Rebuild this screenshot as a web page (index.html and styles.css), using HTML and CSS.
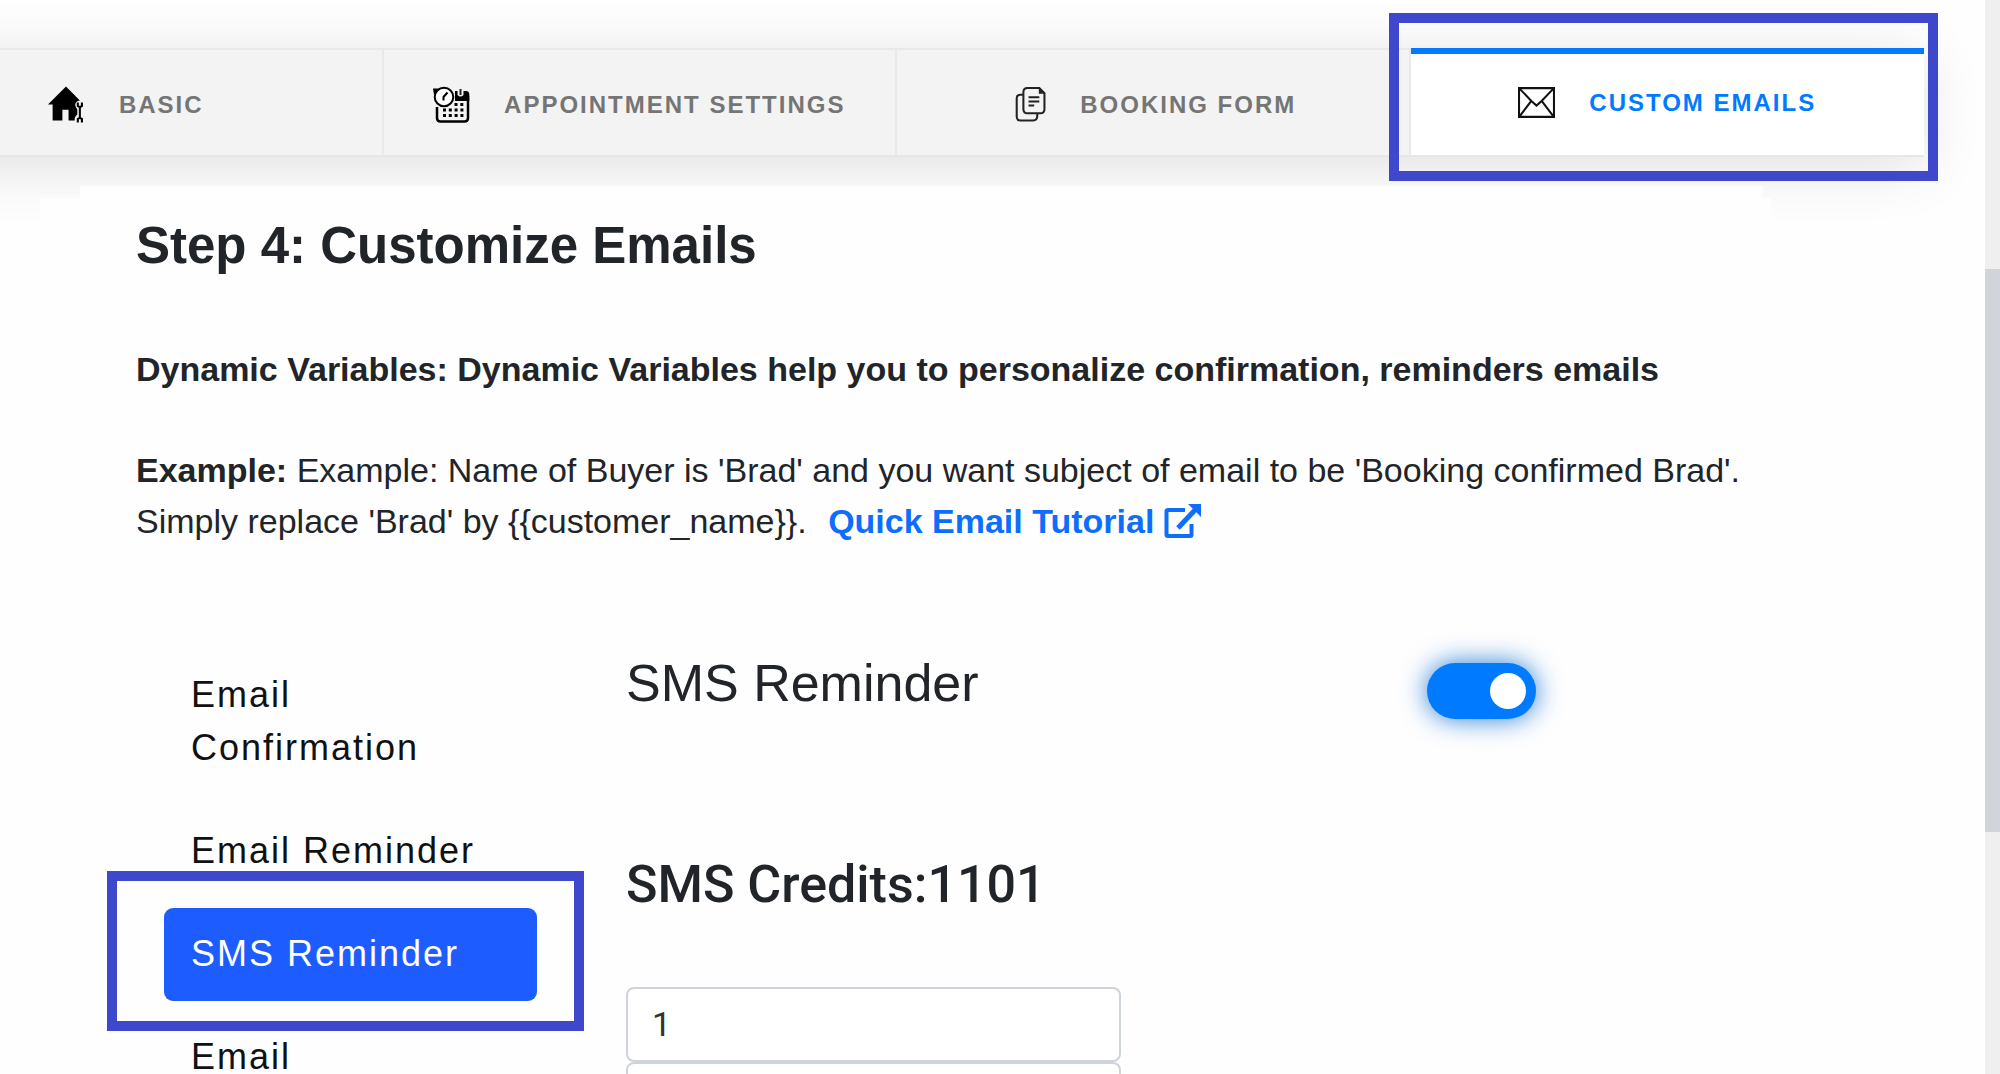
FILE: index.html
```
<!DOCTYPE html>
<html lang="en">
<head>
    <meta charset="UTF-8">
    <meta name="viewport" content="width=device-width, initial-scale=1.0">
    <title>Customize Emails</title>
    <link rel="stylesheet" href="styles.css">
</head>
<body>
    <div class="page">
        <nav class="tabs">
            <a class="tab" href="#basic">
                <svg class="tab-icon" viewBox="0 0 36 36">
                    <path d="M0 18 L17.500 0.500 L31 14 Q27 14.500 26.500 18 Q26.500 21 28.500 22.500 V28 Q25.500 30 26 33.500 H20 V23 H14 V33.500 H4.500 V18 Z" fill="#000"/>
                    <path d="M29 16 V19.500 L31 20.500 L33 19.500 V16 M31 20.500 V31 M29 35.500 V32 L31 31 L33 32 V35.500" fill="none" stroke="#000" stroke-width="2"/>
                </svg>
                Basic
            </a>
            <a class="tab" href="#appointment">
                <svg class="tab-icon" viewBox="0 0 37 37">
                    <path d="M4 21 V32 Q4 35.500 7.500 35.500 H31.500 Q35 35.500 35 32 V10" fill="none" stroke="#000" stroke-width="2.500"/>
                    <path d="M22 5 H24.500 V9 Q27.500 12 30.500 9 V5 H33 Q36.300 5 36.300 8.500 V15 H22 Z" fill="#000"/>
                    <path d="M27.500 3 V9" stroke="#222" stroke-width="2"/>
                    <circle cx="11" cy="11" r="9.300" fill="#fff" stroke="#000" stroke-width="2"/>
                    <path d="M0 2.500 H6 L1 9 Z" fill="#000"/>
                    <path d="M14.500 6.500 L10.500 11 V14.500" fill="none" stroke="#000" stroke-width="2"/>
                    <path d="M21.500 18.500 H31 M10 24 H31 M10 29.500 H31" fill="none" stroke="#000" stroke-width="3" stroke-dasharray="3 2.800"/>
                </svg>
                Appointment settings
            </a>
            <a class="tab" href="#booking">
                <svg class="tab-icon" viewBox="0 0 30 36" preserveAspectRatio="xMaxYMid">
                    <g fill="none" stroke="#222" stroke-width="2">
                        <path d="M7.500 8.500 H5 Q1.500 8.500 1.500 12 V30 Q1.500 33.500 5 33.500 H17.500 Q21.500 33.500 21.500 29.500 V27"/>
                        <path d="M12 2 H23.500 L28.500 7 V22.500 Q28.500 26.500 24.500 26.500 H12 Q8 26.500 8 22.500 V6 Q8 2 12 2 Z"/>
                        <path d="M13 11 H23.500 M13 15 H23.500 M13 19 H18.500"/>
                    </g>
                    <path d="M23 2 V7.500 H28.500 Z" fill="#222"/>
                </svg>
                Booking form
            </a>
            <a class="tab tab-active" href="#emails">
                <svg class="tab-icon" viewBox="0 0 36 36">
                    <path d="M1 4 H35 V32 H1 Z M1.500 4.500 L13 16.500 L18 21 L23 16.500 L34.500 4.500 M1.500 31.500 L13 16.500 M34.500 31.500 L23 16.500" fill="none" stroke="#111" stroke-width="2"/>
                </svg>
                Custom emails
                <span class="marker marker-tab"></span>
            </a>
        </nav>

        <main class="content">
            <h1>Step 4: Customize Emails</h1>
            <p class="intro"><b>Dynamic Variables: Dynamic Variables help you to personalize confirmation, reminders emails</b></p>
            <p class="intro">
                <b>Example:</b> Example: Name of Buyer is 'Brad' and you want subject of email to be 'Booking confirmed Brad'.<br>
                Simply replace 'Brad' by {{customer_name}}.
                <a class="tutorial" href="#tutorial">Quick Email Tutorial
                    <svg class="tutorial-icon" viewBox="0 0 38 36">
                        <path d="M21 7 H4 Q2.500 7 2.500 8.500 V31.500 Q2.500 33 4 33 H26 Q27.500 33 27.500 31.500 V21" fill="none" stroke="#0d6efd" stroke-width="4"/>
                        <path d="M14 25 L31 7" stroke="#0d6efd" stroke-width="5"/>
                        <path d="M24 1 H37 V14 Z" fill="#0d6efd"/>
                    </svg>
                </a>
            </p>

            <div class="panes">
                <div class="menu">
                    <a class="menu-item" href="#confirmation">Email Confirmation</a>
                    <a class="menu-item" href="#reminder">Email Reminder</a>
                    <a class="menu-item menu-active" href="#sms">SMS Reminder<span class="marker marker-menu"></span></a>
                    <a class="menu-item" href="#followup">Email</a>
                </div>
                <form class="settings">
                    <div class="settings-head">
                        <h2><label for="sms">SMS Reminder</label></h2>
                        <input class="switch" type="checkbox" id="sms" checked>
                    </div>
                    <h2 class="credits">SMS Credits:1101</h2>
                    <input class="field" type="text" value="1" aria-label="Reminder time">
                    <input class="field" type="text" aria-label="Reminder unit">
                </form>
            </div>
        </main>
    </div>
    <div class="scrollbar"><div class="thumb"></div></div>
</body>
</html>
```

FILE: styles.css
```
* {
    box-sizing: border-box;
}
body {
    display: flex;
    height: 100vh;
    margin: 0;
    overflow: hidden;
    background: #fefefe;
    color: #212529;
    font-family: "Liberation Sans", Arial, sans-serif;
    font-size: 34px;
}
a {
    text-decoration: none;
}
.page {
    flex: 1;
    min-width: 0;
    overflow: hidden;
}

/* tabs */
.tabs {
    display: grid;
    grid-template-columns: repeat(4, 1fr);
    margin: 48px 61px 0 -130px;
    border-top: 2px solid #e9e9e9;
    border-bottom: 2px solid #e7e7e7;
    background: #f3f3f3;
    box-shadow: 0 10px 60px rgba(0, 0, 0, 0.12);
}
.tab {
    position: relative;
    display: flex;
    align-items: center;
    justify-content: center;
    gap: 34px;
    height: 105px;
    padding-top: 4px;
    border-right: 2px solid #e9e9e9;
    color: #757575;
    font-size: 24px;
    font-weight: bold;
    letter-spacing: 2px;
    text-transform: uppercase;
}
.tab-icon {
    width: 37px;
    height: 37px;
}
.tab-active {
    height: 107px;
    margin-top: -2px;
    padding: 0 0 4px;
    border-top: 6px solid #007bff;
    border-right: none;
    background: #fff;
    color: #007bff;
}

/* highlight frames */
.marker {
    position: absolute;
    border: 10px solid #3f48cc;
}
.marker-tab {
    inset: -41px -14px -26px -22px;
}
.marker-menu {
    inset: -37px -47px -30px -57px;
}

/* content */
.content {
    position: relative;
    margin: 29px 222px 0 80px;
    padding: 30px 0 0 56px;
    background: #fefefe;
    box-shadow: -40px 12px 0 #fefefe, 8px 12px 0 #fefefe;
}
h1 {
    margin: 0 0 68px;
    font-size: 51px;
    line-height: 60px;
}
.intro {
    margin: 0 0 50px;
    line-height: 51px;
}
.tutorial {
    margin-left: 12px;
    color: #0d6efd;
    font-weight: bold;
}
.tutorial-icon {
    width: 38px;
    height: 36px;
    vertical-align: -6px;
}
.panes {
    display: flex;
    gap: 89px;
    margin-top: 102px;
    padding-left: 28px;
}
.menu {
    display: flex;
    flex-direction: column;
    gap: 10px;
    width: 373px;
}
.menu-item {
    position: relative;
    padding: 19px 27px 21px;
    border-radius: 9px;
    color: #111;
    font-size: 36px;
    line-height: 53px;
    letter-spacing: 2px;
}
.menu-active {
    background: #1d5dff;
    color: #fff;
}
.settings {
    flex: 1;
}
.settings-head {
    display: flex;
    align-items: flex-start;
    justify-content: space-between;
    padding-right: 227px;
}
h2 {
    margin: 3px 0 0;
    font-size: 52px;
    font-weight: normal;
    line-height: 62px;
}
.credits {
    margin: 135px 0 71px;
    font-family: Roboto, sans-serif;
    font-weight: 500;
}
.switch {
    appearance: none;
    width: 109px;
    height: 56px;
    margin: 14px 0 0;
    padding: 10px;
    border-radius: 28px;
    background: #007bff;
    box-shadow: 0 0 27px #2a7fd8;
}
.switch::before {
    content: "";
    display: block;
    width: 36px;
    height: 36px;
    margin-left: auto;
    border-radius: 50%;
    background: #fff;
}
.field {
    display: block;
    width: 495px;
    height: 75px;
    padding: 0 24px 2px;
    border: 2px solid #ced4da;
    border-radius: 8px;
    background: #fff;
    color: #333;
    font: 34px Roboto, sans-serif;
}

/* page scrollbar */
.scrollbar {
    width: 15px;
    padding-top: 269px;
    background: #efefef;
}
.thumb {
    height: 563px;
    background: #d1d5da;
}
```
